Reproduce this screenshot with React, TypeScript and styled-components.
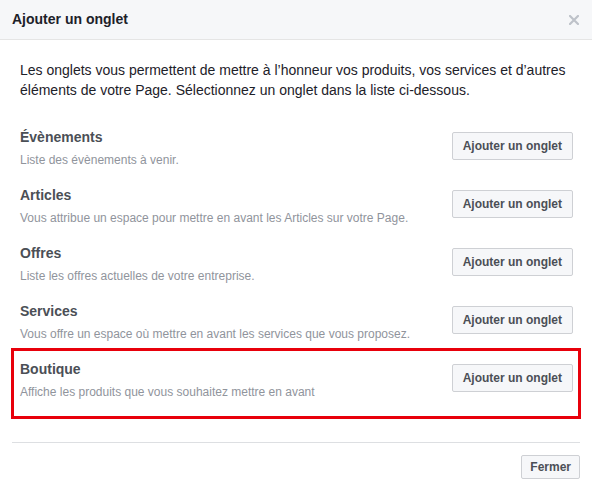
import styled, { createGlobalStyle } from "styled-components";

const Details = {
    Title: "Ajouter un onglet",
    Intro: "Les onglets vous permettent de mettre à l’honneur vos produits, vos services et d’autres éléments de votre Page. Sélectionnez un onglet dans la liste ci-dessous.",
    AddLabel: "Ajouter un onglet",
    CloseLabel: "Fermer",
    Tabs: [
        { Name: "Évènements", Text: "Liste des évènements à venir." },
        { Name: "Articles", Text: "Vous attribue un espace pour mettre en avant les Articles sur votre Page." },
        { Name: "Offres", Text: "Liste les offres actuelles de votre entreprise." },
        { Name: "Services", Text: "Vous offre un espace où mettre en avant les services que vous proposez." },
        { Name: "Boutique", Text: "Affiche les produits que vous souhaitez mettre en avant", Highlight: true },
    ],
}

const GlobalStyle = createGlobalStyle`
    html, body {
        margin: 0;
        padding: 0;
        background: #fff;
        font-family: "Liberation Sans", Arial, Helvetica, sans-serif;
        -webkit-font-smoothing: antialiased;
    }
`

const StyledDialog = styled.div`
    width: 592px;
    height: 491px;
    display: flex;
    flex-direction: column;
    background: #fff;
`

const StyledHeader = styled.header`
    height: 39px;
    display: flex;
    align-items: center;
    justify-content: space-between;
    padding: 0 12px;
    background: #f6f7f9;
    border-bottom: 1px solid #e5e5e5;
`

const StyledTitle = styled.h1`
    margin: 0;
    font-size: 14px;
    font-weight: bold;
    color: #1d2129;
    line-height: 19px;
`

const StyledClose = styled.button`
    display: flex;
    align-items: center;
    justify-content: center;
    width: 16px;
    height: 16px;
    padding: 0;
    margin-right: -2px;
    border: none;
    background: none;
`

const StyledBody = styled.div`
    padding: 20px 11px 0;
`

const StyledIntro = styled.p`
    margin: 0 9px;
    font-size: 14px;
    line-height: 20px;
    color: #1d2129;
`

const StyledList = styled.ul`
    list-style: none;
    margin: 16px 0 0;
    padding: 0;
`

const StyledItem = styled.li<{ $highlight?: boolean }>`
    display: flex;
    justify-content: space-between;
    align-items: flex-start;
    padding: 9px 5px ${(p) => (p.$highlight ? "16px" : "3px")} 6px;
    border: 3px solid ${(p) => (p.$highlight ? "#e8000b" : "transparent")};
`

const StyledText = styled.div`
    display: flex;
    flex-direction: column;
    gap: 6px;
`

const StyledName = styled.div`
    font-size: 14px;
    font-weight: bold;
    line-height: 18px;
    color: #4b4f56;
`

const StyledDesc = styled.div`
    font-size: 12px;
    line-height: 16px;
    color: #90949c;
`

const StyledButton = styled.button<{ $small?: boolean }>`
    height: ${(p) => (p.$small ? "24px" : "28px")};
    margin-top: ${(p) => (p.$small ? "0" : "4px")};
    padding: 0 ${(p) => (p.$small ? "8px" : "10px")};
    flex-shrink: 0;
    background: #f6f7f9;
    border: 1px solid #ced0d4;
    border-radius: 2px;
    font-family: "Liberation Sans", Arial, Helvetica, sans-serif;
    font-size: 12px;
    font-weight: bold;
    color: #4b4f56;
    line-height: 22px;
`

const StyledFooter = styled.footer`
    margin: 23px 12px 0;
    padding: 12px 0;
    border-top: 1px solid #dddfe2;
    display: flex;
    justify-content: flex-end;
`

export default function App() {
    return (
        <StyledDialog>
            <GlobalStyle />
            <StyledHeader>
                <StyledTitle>{Details.Title}</StyledTitle>
                <StyledClose aria-label="Fermer">
                    <svg width="10" height="10" viewBox="0 0 10 10">
                        <path d="M1 1 L9 9 M9 1 L1 9" stroke="#bec2c9" strokeWidth="2.2" strokeLinecap="square" />
                    </svg>
                </StyledClose>
            </StyledHeader>
            <StyledBody>
                <StyledIntro>{Details.Intro}</StyledIntro>
                <StyledList>
                    {Details.Tabs.map((tab, index) => (
                        <StyledItem key={index} $highlight={tab.Highlight}>
                            <StyledText>
                                <StyledName>{tab.Name}</StyledName>
                                <StyledDesc>{tab.Text}</StyledDesc>
                            </StyledText>
                            <StyledButton>{Details.AddLabel}</StyledButton>
                        </StyledItem>
                    ))}
                </StyledList>
            </StyledBody>
            <StyledFooter>
                <StyledButton $small>{Details.CloseLabel}</StyledButton>
            </StyledFooter>
        </StyledDialog>
    );
}
